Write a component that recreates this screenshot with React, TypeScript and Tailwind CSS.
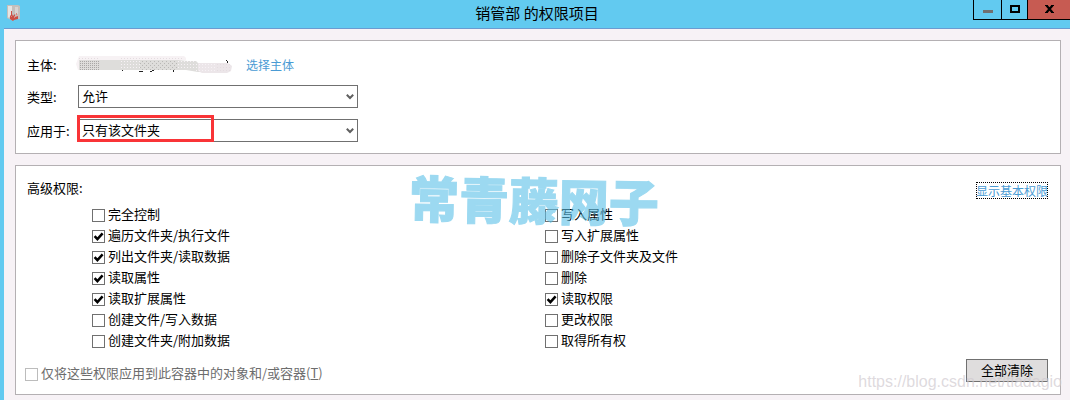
import React, { useState } from 'react';

const LEFT_PERMISSIONS = [
  { id: 'full', label: '完全控制', checked: false },
  { id: 'traverse', label: '遍历文件夹/执行文件', checked: true },
  { id: 'list', label: '列出文件夹/读取数据', checked: true },
  { id: 'readAttr', label: '读取属性', checked: true },
  { id: 'readExtAttr', label: '读取扩展属性', checked: true },
  { id: 'createFile', label: '创建文件/写入数据', checked: false },
  { id: 'createFolder', label: '创建文件夹/附加数据', checked: false },
];

const RIGHT_PERMISSIONS = [
  { id: 'writeAttr', label: '写入属性', checked: false },
  { id: 'writeExtAttr', label: '写入扩展属性', checked: false },
  { id: 'deleteChild', label: '删除子文件夹及文件', checked: false },
  { id: 'delete', label: '删除', checked: false },
  { id: 'readPerm', label: '读取权限', checked: true },
  { id: 'changePerm', label: '更改权限', checked: false },
  { id: 'takeOwner', label: '取得所有权', checked: false },
];

const ALL_PERMISSIONS = [...LEFT_PERMISSIONS, ...RIGHT_PERMISSIONS];

const FolderIcon = () => (
  <svg className="w-4 h-4" viewBox="0 0 16 16" aria-hidden="true">
    <path d="M2 0h11l2 1v13H9l-1 2-4-2-2-1z" fill="#c4bfbc" />
    <path d="M3 1h4v7l-3 5-1-1z" fill="#e6e4e2" />
    <path d="M10 2h3v7h-3z" fill="#d8d5d3" />
    <path d="M6 6h1v3l1 2 2-2v3l3-1v3l-4 1-1 1-3-2 0-3 1-1z" fill="#cc4f44" />
    <path d="M11 8h1v2h-1zM9 11h1v2H9zM6 11h1v1H6z" fill="#d98880" />
  </svg>
);

// blotted out account name
const HiddenName = () => (
  <svg className="w-[158px] h-5" viewBox="0 0 158 20" aria-hidden="true">
    <defs>
      <pattern id="lightDots" width="3" height="3" patternUnits="userSpaceOnUse">
        <rect width="1" height="1" fill="#e4dce0" />
      </pattern>
      <pattern id="whiteDots" width="3" height="3" patternUnits="userSpaceOnUse">
        <rect width="1" height="1" fill="#f7f2f6" />
      </pattern>
      <pattern id="grayDots" width="4" height="4" patternUnits="userSpaceOnUse">
        <rect width="1" height="1" fill="#b9b8b6" />
        <rect x="2" y="2" width="1" height="1" fill="#b9b8b6" />
      </pattern>
      <pattern id="denseDots" width="2" height="2" patternUnits="userSpaceOnUse">
        <rect width="1" height="1" fill="#a9a8a6" />
      </pattern>
    </defs>
    <path d="M0 9l3-8h19v4H4v10H2z" fill="#f7f2f4" />
    <path d="M22 1h86l2 2v2H22z" fill="#f7f2f4" />
    <path d="M2 1h20v4H2zM44 1h64v4H44z" fill="url(#lightDots)" />
    <path d="M3 5h99l10 1h8l2 2h20l0 8-20 1-12-2H3z" fill="#dedddb" />
    <path d="M122 8h30l4 3-1 5-4 2h-25l-4-2z" fill="#ece6e9" />
    <path d="M3 5h20v10H3z" fill="url(#denseDots)" />
    <path d="M44 5h20v10H44zM102 6h18v9h-18zM120 8h22v9h-22z" fill="url(#whiteDots)" />
    <path d="M64 5h38v10H64z" fill="url(#grayDots)" />
    <path d="M140 8h12l4 3-1 5-4 2h-11z" fill="url(#lightDots)" />
    <path
      d="M46 15h1v1h-1zM63 16h4v1h-4zM74 16h2v1h-2zM76 15h2v1h-2zM97 15h1v2h-1zM150 5h1v1h1v2h-1v-2h-1z"
      fill="#222222"
    />
  </svg>
);

const SelectField = ({ id, options }: { id: string; options: string[] }) => (
  <div className="relative w-[280px]">
    <select
      id={id}
      className="block w-full h-[23px] appearance-none rounded-none border border-[#707070] bg-white pb-0.5 pl-[3px] pr-5 text-[13px] leading-5 text-black"
    >
      {options.map((option) => (
        <option key={option}>{option}</option>
      ))}
    </select>
    <svg
      className="absolute right-1 top-2 w-2 h-2 pointer-events-none"
      viewBox="0 0 8 8"
      aria-hidden="true"
    >
      <path d="M0.8 1.8L4 5L7.2 1.8" fill="none" stroke="#606060" strokeWidth="2" />
    </svg>
  </div>
);

type CheckProps = {
  label: React.ReactNode;
  checked: boolean;
  disabled?: boolean;
  onChange?: () => void;
};

const Check = ({ label, checked, disabled, onChange }: CheckProps) => (
  <label
    className={`flex h-[21px] items-start gap-[3px] whitespace-nowrap ${
      disabled ? 'text-[#6d6d6d]' : 'text-black'
    }`}
  >
    <span className="relative mt-[5px] size-[13px] shrink-0">
      <input
        type="checkbox"
        checked={checked}
        disabled={disabled}
        onChange={onChange}
        className="block size-[13px] appearance-none border border-[#707070] bg-white disabled:border-[#bcbcbc]"
      />
      {checked && (
        <svg
          className="absolute inset-0 size-[13px] pointer-events-none"
          viewBox="0 0 13 13"
          aria-hidden="true"
        >
          <path d="M2.6 6.2L5.4 9.2L10.6 3.4" fill="none" stroke="#000000" strokeWidth="2.5" />
        </svg>
      )}
    </span>
    <span>{label}</span>
  </label>
);

const TitleBar = () => (
  <header className="relative flex h-7 items-center justify-center bg-[#62caf0] pl-1">
    <div className="absolute left-[5px] top-[5px]">
      <FolderIcon />
    </div>
    <h1 className="pb-0.5 text-[15px] leading-6">销管部 的权限项目</h1>
    <div className="absolute right-0 top-0 flex h-5 border-b border-l border-black">
      <button type="button" aria-label="最小化" className="flex w-[27px] justify-center pt-[10px]">
        <span className="h-[3px] w-[10px] bg-[#707070]" />
      </button>
      <button
        type="button"
        aria-label="最大化"
        className="flex w-[26px] justify-center border-l border-black pt-[5px]"
      >
        <span className="h-2 w-[10px] border-2 border-black" />
      </button>
      <button
        type="button"
        aria-label="关闭"
        className="flex w-[43px] justify-center border-l border-black bg-[#c75b52] pt-[5px]"
      >
        <svg className="w-[9px] h-2" viewBox="0 0 9 8" aria-hidden="true">
          <path d="M1.5 0.5L7.5 7.5M7.5 0.5L1.5 7.5" stroke="#000000" strokeWidth="2.2" />
          <path d="M0 0.5h3M6 0.5h3M0 7.5h3M6 7.5h3" stroke="#000000" strokeWidth="1" />
        </svg>
      </button>
    </div>
  </header>
);

const App = () => {
  const [checkedIds, setCheckedIds] = useState<string[]>(
    ALL_PERMISSIONS.filter((p) => p.checked).map((p) => p.id)
  );

  const toggle = (id: string) => {
    setCheckedIds((prev) =>
      prev.includes(id) ? prev.filter((item) => item !== id) : [...prev, id]
    );
  };

  return (
    <div className="relative flex min-h-screen flex-col overflow-hidden bg-[#f7f2f6] font-['Noto_Sans_CJK_SC',sans-serif] text-[13px] leading-5 text-black">
      <TitleBar />
      <main className="flex-1 border-l-4 border-[#62caf0]">
        <div className="flex flex-col gap-[11px] border-t border-[#6b9bd1] pb-[5px] pl-[11px] pr-[9px] pt-[11px]">
          <section className="border border-[#b4b0b3] bg-white pb-[11px] pl-[11px] pt-3">
            <div className="flex h-[23px] items-center">
              <span className="w-[49px]">主体:</span>
              <HiddenName />
              <a href="#" className="ml-3 text-[12px] text-[#4a9bd4]">
                选择主体
              </a>
            </div>
            <div className="mt-[9px] flex h-[23px] items-center">
              <label htmlFor="type" className="w-[51px]">
                类型:
              </label>
              <SelectField id="type" options={['允许', '拒绝']} />
            </div>
            <div className="relative mt-[11px] flex h-[23px] items-center">
              <label htmlFor="scope" className="w-[51px]">
                应用于:
              </label>
              <SelectField id="scope" options={['只有该文件夹', '此文件夹、子文件夹和文件']} />
              <div className="absolute -top-1 left-[50px] h-[27px] w-[137px] border-[3px] border-[#f93437] pointer-events-none" />
            </div>
          </section>

          <section className="border border-[#b4b0b3] bg-white pb-[10px] pl-[9px] pr-3">
            <div className="flex items-start justify-between pt-3">
              <h2 className="pl-0.5">高级权限:</h2>
              <a
                href="#"
                className="mt-1 text-[12px] leading-[17px] text-[#4a9bd4] outline-1 -outline-offset-1 outline-dotted outline-black"
              >
                显示基本权限
              </a>
            </div>
            <div className="grid grid-cols-2 pl-[67px] pr-[50px] pt-[5px]">
              {[LEFT_PERMISSIONS, RIGHT_PERMISSIONS].map((column, i) => (
                <div key={i}>
                  {column.map((p) => (
                    <Check
                      key={p.id}
                      label={p.label}
                      checked={checkedIds.includes(p.id)}
                      onChange={() => toggle(p.id)}
                    />
                  ))}
                </div>
              ))}
            </div>
            <div className="flex items-end justify-between pt-2">
              <Check
                label={
                  <>
                    仅将这些权限应用到此容器中的对象和/或容器(<u>T</u>)
                  </>
                }
                checked={false}
                disabled
              />
              <button
                type="button"
                onClick={() => setCheckedIds([])}
                className="mb-0.5 h-[23px] w-[82px] border border-[#707070] bg-[#dfdddd] pb-0.5 leading-5"
              >
                全部清除
              </button>
            </div>
          </section>
        </div>
      </main>

      {/* Watermarks */}
      <div className="absolute left-[409px] top-[170px] rotate-1 whitespace-nowrap text-[50px] font-black leading-[56px] text-[#5bc0e8] opacity-60 [-webkit-text-stroke:1px_#5bc0e8] pointer-events-none">
        常青藤网子
      </div>
      <div className="absolute right-2 top-[372px] whitespace-nowrap font-['Liberation_Sans',Arial,sans-serif] text-[16px] text-[#d0cacf]/70 pointer-events-none">
        https://blog.csdn.net/tladagio
      </div>
    </div>
  );
};

export default App;
